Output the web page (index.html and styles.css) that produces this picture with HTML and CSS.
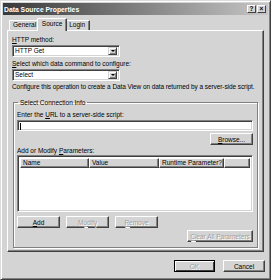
FILE: index.html
```html
<!DOCTYPE html>
<html>
<head>
<meta charset="utf-8">
<link rel="stylesheet" href="styles.css">
</head>
<body>
<div class="window">
  <div class="titlebar">
    <span class="title">Data Source Properties</span>
    <div class="tbtns">
      <span class="tbtn">?</span>
      <span class="tbtn">×</span>
    </div>
  </div>
  <div class="tabs">
    <div class="tab t-general">General</div>
    <div class="tab active">Source</div>
    <div class="tab t-login">Login</div>
  </div>
  <div class="panel">
    <div class="label first"><u>H</u>TTP method:</div>
    <div class="select"><span class="sval">HTTP Get</span><span class="arrow"><span class="tri"></span></span></div>
    <div class="label second"><u>S</u>elect which data command to configure:</div>
    <div class="select"><span class="sval">Select</span><span class="arrow"><span class="tri"></span></span></div>
    <div class="label desc">Configure this operation to create a Data View on data returned by a server-side script.</div>
    <fieldset class="group">
      <legend>Select Connection Info</legend>
      <div class="label">Enter the <u>U</u>RL to a server-side script:</div>
      <div class="input"><span class="caret"></span></div>
      <div class="row right browse-row"><span class="btn browse"><u>B</u>rowse...</span></div>
      <div class="label params">Add or Modify <u>P</u>arameters:</div>
      <div class="list">
        <div class="lhead">
          <span class="col c1">Name</span>
          <span class="col c2">Value</span>
          <span class="col c3">Runtime Parameter?</span>
          <span class="col c4"></span>
        </div>
      </div>
      <div class="row btnrow">
        <span class="btn w43"><u>A</u>dd</span>
        <span class="btn w43 disabled">M<u>o</u>dify</span>
        <span class="btn w43 disabled"><u>R</u>emove</span>
      </div>
      <div class="row right clear-row"><span class="btn clear disabled"><u>C</u>lear All Parameters</span></div>
    </fieldset>
  </div>
  <div class="footer">
    <span class="btn ok disabled">OK</span>
    <span class="btn cancel">Cancel</span>
  </div>
</div>
</body>
</html>
```

FILE: styles.css
```css
* { box-sizing: border-box; }
html, body { margin: 0; padding: 0; background: #d4d4d4; }
.window {
  width: 271px; height: 280px;
  background: #d4d4d4;
  border: 1px solid;
  border-color: #dcdcdc #404040 #404040 #dcdcdc;
  box-shadow: inset 1px 1px 0 #fff, inset -1px -1px 0 #808080;
  padding: 2px;
  display: flex; flex-direction: column;
  font-family: "Liberation Sans", Arial, sans-serif;
  font-size: 6.5px;
  color: #000;
}
u { text-decoration: underline; text-underline-offset: 1px; }
.titlebar {
  height: 12px;
  background: linear-gradient(to right, #3a3a3a 0%, #6a6a6a 35%, #c6c6c6 100%);
  display: flex; align-items: center; justify-content: space-between;
  padding: 0 2px 0 1px;
}
.title { color: #fff; font-weight: bold; font-size: 6.8px; }
.tbtns { display: flex; gap: 1px; }
.tbtn {
  width: 9px; height: 8px;
  background: #d4d4d4;
  border: 1px solid; border-color: #fff #404040 #404040 #fff;
  font-size: 6.5px; font-weight: bold; line-height: 6px; text-align: center;
}
.tabs {
  margin: 3px 4px 0;
  height: 12px;
  display: flex; align-items: flex-end;
  padding-left: 2px;
}
.tab {
  height: 10px;
  line-height: 8px;
  padding: 0 2px;
  text-align: center;
  white-space: nowrap;
  border: 1px solid; border-bottom: none;
  border-color: #fff #404040 transparent #fff;
  box-shadow: inset -1px 0 0 #808080;
  border-radius: 1px 1px 0 0;
}
.t-general { padding: 0 2px 0 3px; }
.t-login { width: 25px; border-left: none; }
.tab.active {
  height: 13px; width: 30px;
  margin: 0 -2px -1px;
  background: #d4d4d4;
  position: relative; z-index: 1;
  padding-top: 1px;
}
.panel {
  height: 222px;
  margin: 0 4px;
  border: 1px solid;
  border-color: #fff #404040 #404040 #fff;
  box-shadow: inset -1px -1px 0 #808080;
  padding: 4px 5px 0 4px;
  display: flex; flex-direction: column;
}
.label { height: 9px; line-height: 9px; white-space: nowrap; }
.label.second { margin-top: 2px; }
.select {
  margin-top: 1px;
  width: 108px; height: 12px;
  background: #fff;
  border: 1px solid; border-color: #808080 #fff #fff #808080;
  box-shadow: inset 1px 1px 0 #404040, inset -1px -1px 0 #d4d4d4;
  display: flex; align-items: center; justify-content: space-between;
  padding: 2px;
}
.sval { line-height: 8px; }
.arrow {
  width: 9px; height: 8px;
  background: #d4d4d4;
  border: 1px solid; border-color: #d4d4d4 #404040 #404040 #d4d4d4;
  box-shadow: inset 1px 1px 0 #fff, inset -1px -1px 0 #808080;
  display: flex; align-items: center; justify-content: center;
}
.tri { width: 0; height: 0; border-left: 2px solid transparent; border-right: 2px solid transparent; border-top: 2px solid #000; }
.label.desc { margin-top: 1px; letter-spacing: -0.08px; }
.group {
  margin: 7px 0 0 1px;
  padding: 0 4px 0 3px;
  height: 150px;
  border: 1px solid #808080;
  box-shadow: 1px 1px 0 #fff, inset 1px 1px 0 #fff;
  display: flex; flex-direction: column;
  min-width: 0;
}
.group legend { padding: 0 2px; margin-left: 1px; line-height: 9px; height: 9px; }
.group > .label:first-of-type { margin-top: 3px; }
.input {
  margin-top: 1px;
  height: 11px;
  background: #fff;
  border: 1px solid; border-color: #808080 #fff #fff #808080;
  box-shadow: inset 1px 1px 0 #404040, inset -1px -1px 0 #d4d4d4;
  padding: 2px 0 0 2px;
}
.caret { display: block; width: 1px; height: 7px; background: #000; }
.row { display: flex; }
.row.right { justify-content: flex-end; }
.browse-row { margin-top: 2px; }
.btn {
  display: flex; align-items: center; justify-content: center;
  height: 12px;
  background: #d4d4d4;
  border: 1px solid; border-color: #fff #404040 #404040 #fff;
  box-shadow: inset -1px -1px 0 #808080;
  white-space: nowrap;
}
.btn.disabled { color: #a0a0a0; text-shadow: 1px 1px 0 #fff; }
.browse { width: 43px; }
.label.params { margin-top: 1px; }
.list {
  height: 57px;
  background: #fff;
  border: 1px solid; border-color: #808080 #fff #fff #808080;
  box-shadow: inset 1px 1px 0 #404040, inset -1px -1px 0 #d4d4d4;
  padding: 2px 2px 0 2px;
}
.lhead { display: flex; height: 10px; }
.col {
  height: 10px; line-height: 8px;
  background: #d4d4d4;
  border: 1px solid; border-color: #fff #404040 #404040 #fff;
  box-shadow: inset -1px -1px 0 #808080;
  padding-left: 2px;
  white-space: nowrap; overflow: hidden;
}
.c1 { width: 69px; }
.c2 { width: 70px; }
.c3 { width: 65px; }
.c4 { flex: 1; }
.btnrow { margin-top: 4px; gap: 6px; }
.w43 { width: 43px; }
.clear-row { margin-top: 2px; }
.clear { width: 66px; }
.footer {
  display: flex; justify-content: flex-end; gap: 8px;
  padding: 8px 3px 0 0;
}
.ok { width: 41px; border: 1px solid #000; box-shadow: inset 1px 1px 0 #fff, inset -1px -1px 0 #404040; }
.cancel { width: 42px; }
```
